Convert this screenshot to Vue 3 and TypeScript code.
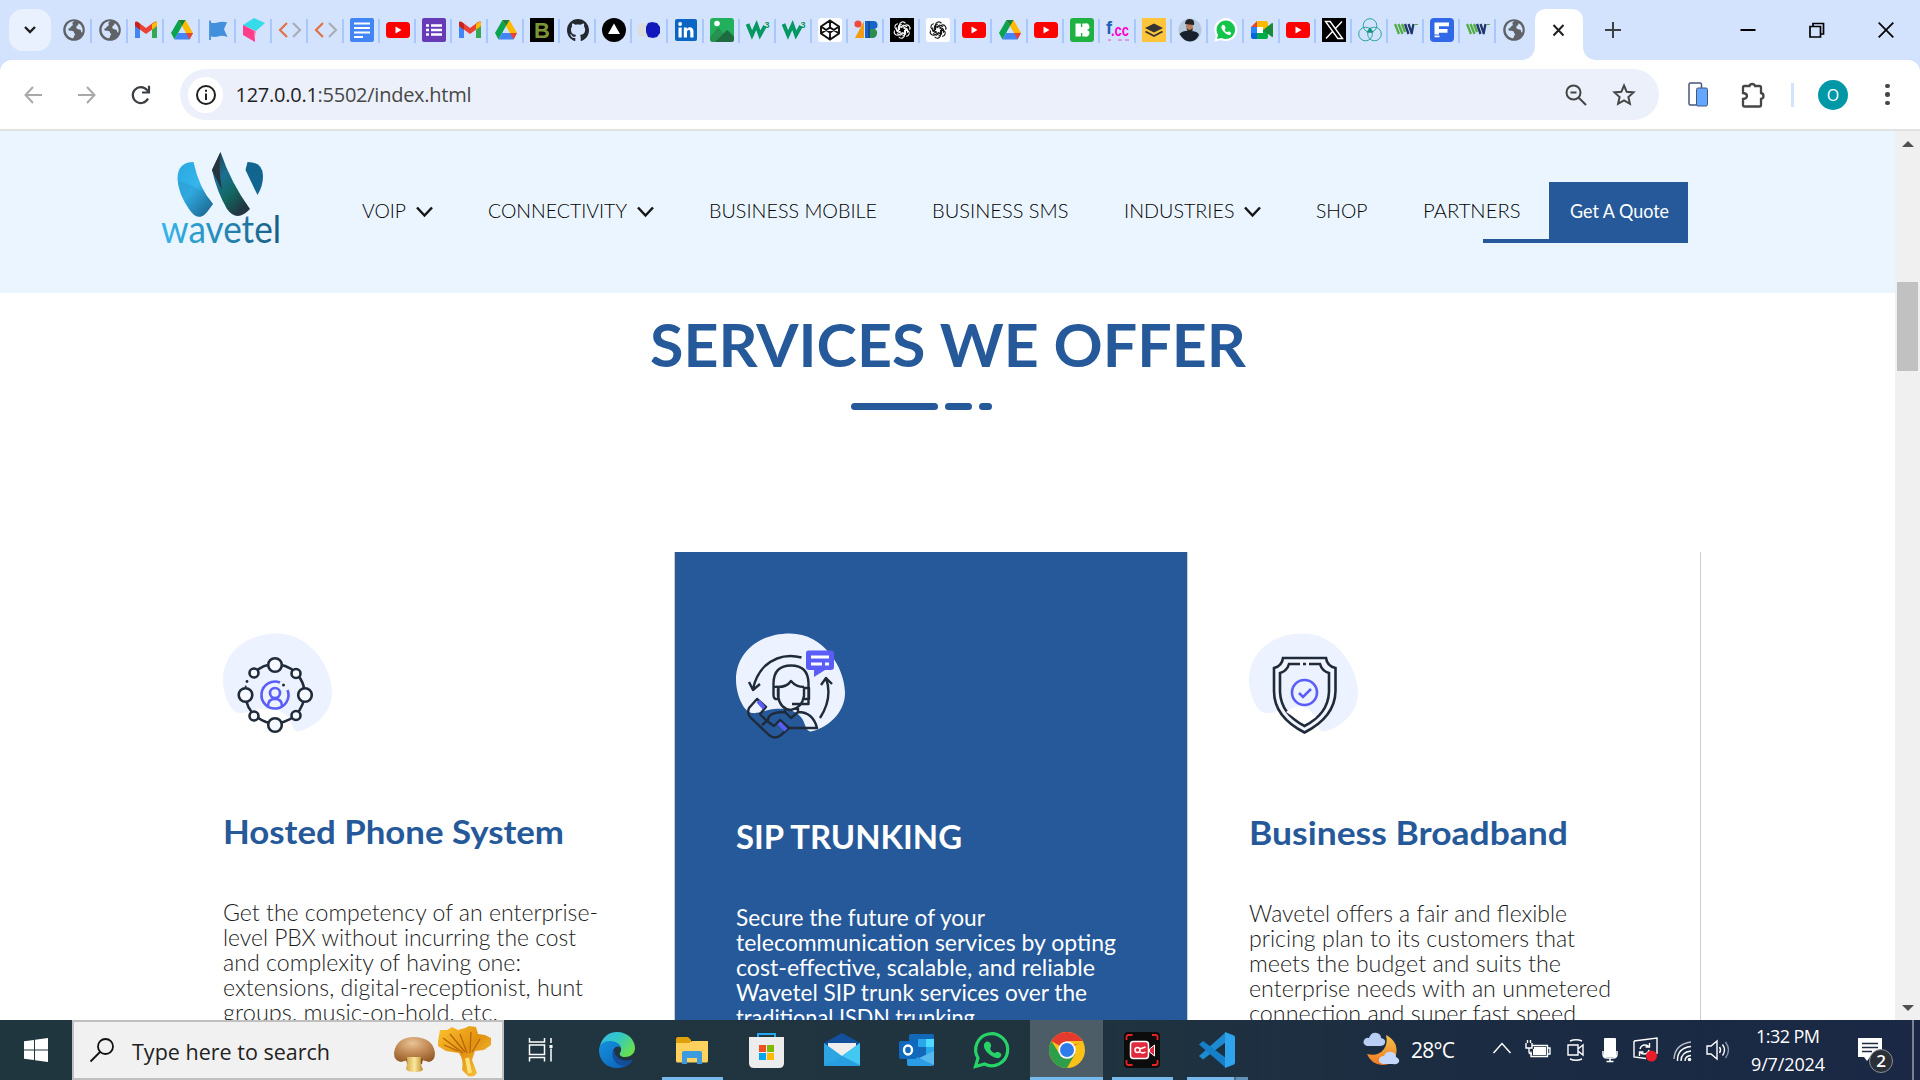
<script setup lang="ts">
import type { Directive } from 'vue'

/** Spreads or tightens the letters so that a label fills the given width. */
const vFit: Directive<HTMLElement, number> = {
  mounted(el, { value }) {
    const n = (el.textContent ?? '').trim().length
    const natural = el.getBoundingClientRect().width
    if (n > 1) {
      const s = (value - natural) / (n - 1)
      el.style.letterSpacing = `${s}px`
      el.style.marginRight = `${-s}px`
    }
  },
}

/** Widens or narrows the letterforms themselves so that a label fills the given width. */
const vStretch: Directive<HTMLElement, number> = {
  mounted(el, { value }) {
    const natural = el.getBoundingClientRect().width
    el.style.transformOrigin = '0 50%'
    el.style.transform = `scaleX(${value / natural})`
    el.style.marginRight = `${value - natural}px`
  },
}

const knotArm = '<path d="M9 12V6a3.800 3.800 0 0 1 7-2M9 9l5-3 4 2"/>'
const knot = [0, 60, 120, 180, 240, 300].map((a) => `<g transform="rotate(${a} 12 12)">${knotArm}</g>`).join('')

const glyphs: Record<string, string> = {
  globe: '<circle cx="12" cy="12" r="10.8" fill="#5f6368"/><path d="M12.5 3c-2 1-2.5 2-1.8 3.3.5 1-.3 1.500-1.200 1.900-1 .4-.8 1.300-1.500 1.800-.8.6-1.700.5-1.700 1.400 0 1 1.500 1.300 3 1.300 1.800 0 2.700.9 2.700 2 0 .8 1.200.7 1.200 1.600 0 1-1.200 1.100-1.200 2.100 0 .8-.5 1.500-1.200 1.800-4-.8-7-4-7.200-8.300C3.600 7 7.600 3 12.500 3zM16.800 5.200c2.300 1.500 3.800 4 3.800 6.900 0 .9-.1 1.700-.4 2.500-.9-.2-1.200-.9-1.200-1.700 0-1-.7-1.500-1.800-1.500-1.600 0-2.900-.8-2.900-2.200 0-1.200.9-1.600 1.600-2 .7-.5.3-1.300.9-2z" fill="#d3e3fd"/>',
  gmail: '<path d="M1 6v14h5V11z" fill="#4285f4"/><path d="M18 11v9h5V6z" fill="#34a853"/><path d="M1 4.500C1 3.500 2.500 3 4 4l8 6 8-6c1.500-1 3-.5 3 .5V8l-11 8L1 8z" fill="#ea4335"/><path d="M18 6.200L21 4c1-.7 2-.2 2 1.500V8l-5 3.800z" fill="#fbbc04"/><path d="M1 8V5.500C1 4 2 3.400 3.500 4L6 6v5.800z" fill="#c5221f"/>',
  drive: '<path d="M8.500 2h7L23 15h-7z" fill="#ffba00"/><path d="M8.500 2L12 8 4.500 21.500 1 15z" fill="#0ca34f"/><path d="M8 15h15l-3.500 6.500h-15z" fill="#4285f4"/><path d="M16 15h7l-3.500 6.500z" fill="#ea4335"/><path d="M8.500 2h7L12 8z" fill="#188038"/>',
  flag: '<path d="M4 2.500V22" stroke="#428fdc" stroke-width="1.800"/><path d="M4.500 4.500q3 1.200 7 0t9.500-.2l-3 7 3.500 7.700q-6-2-9.500-.5-4 1-7.500-.3z" fill="#428fdc"/>',
  cube: '<path d="M1 7L12 0l11 5-9 8z" fill="#35dbe8"/><path d="M1 7l12 6v11L1 17z" fill="#ff3d8b"/><path d="M12 13l2 0-2 10z" fill="#ff7baa"/>',
  code: '<path d="M9 5L2 12l7 7" fill="none" stroke="#e07046" stroke-width="2.200"/><path d="M15 5l7 7-7 7" fill="none" stroke="#a9adb5" stroke-width="2.200"/>',
  docs: '<rect width="24" height="24" rx="2" fill="#4285f4"/><path d="M4 5.500h16M4 10h16M4 14.500h16M4 19h9" stroke="#fff" stroke-width="2.200"/>',
  yt: '<rect y="4" width="24" height="16" rx="3.500" fill="#f00"/><path d="M9.500 8.500v7l6-3.500z" fill="#fff"/>',
  forms: '<rect width="24" height="24" rx="2" fill="#673ab7"/><path d="M4 7.500h3M9 7.500h11M4 12h3M9 12h11M4 16.500h3M9 16.500h11" stroke="#fff" stroke-width="2.700"/>',
  b: '<rect width="24" height="24" fill="#000"/><text x="12" y="20" text-anchor="middle" font-family="Liberation Sans" font-weight="bold" font-size="22" fill="#7c9636">B</text>',
  github: '<path d="M12 1C5.900 1 1 5.900 1 12.300c0 5 3.200 9.200 7.500 10.700.5.100.8-.2.800-.6v-2.500c-3.300.7-4-1.200-4.200-1.800-.4-.9-.9-1.600-1.500-1.900 2-.4 2.500 1.700 3.200 2.200 1 .6 2.200.4 2.700.1.100-.7.400-1.200.7-1.500-2.700-.4-5.200-1.300-5.200-5.300 0-1.300.4-2.300 1.100-3.100-.3-.9-.3-2 .1-3.100 1.200 0 2.300.7 3.200 1.300 1.700-.4 3.600-.4 5.300 0 .9-.6 2-1.300 3.200-1.300.4 1.100.4 2.200.1 3.100.7.800 1.100 1.800 1.100 3.100 0 4-2.500 4.900-5.200 5.300.5.400.8 1.100.8 2.300v3.100c0 .4.300.7.8.6C19.800 21.500 23 17.300 23 12.300 23 5.900 18.100 1 12 1z" fill="#24292f"/>',
  vercel: '<circle cx="12" cy="12" r="12" fill="#000"/><path d="M12 5.500l6 10.500H6z" fill="#fff"/>',
  blob: '<path d="M0 8l3-3 3 1 4-2v16l-4-2-3 1-3-3z" fill="#dcdcdc"/><path d="M10 5l4-1 5 1 3 4v6l-3 4-4 1-5-1-2-5V9z" fill="#1119bd"/>',
  linkedin: '<rect x="1" y="1" width="22" height="22" rx="2" fill="#0a66c2"/><path d="M4.500 9.500h3.200v10H4.500zM9.800 9.500h3.100v1.400c1.500-2.500 6.600-2.300 6.600 2.400v6.200h-3.200V14c0-3-3.300-2.500-3.300 0v5.500H9.800z" fill="#fff"/><circle cx="6.100" cy="6" r="1.900" fill="#fff"/>',
  picture: '<rect width="24" height="24" rx="3" fill="#22b05d"/><path d="M0 19L8 9l6 7 4-4 6 6v3q0 3-3 3H3q-3 0-3-3z" fill="#279250"/><path d="M5 24l12-12 7 7v2q0 3-3 3z" fill="#1e6b40"/><circle cx="7" cy="5.500" r="2.800" fill="#fff"/>',
  w3: '<path d="M1.500 6L6 17l4.500-10L14 17l5-9" fill="none" stroke="#059862" stroke-width="3.800"/><text x="18.500" y="10" font-family="Liberation Sans" font-weight="bold" font-size="9" fill="#059862">3</text>',
  codepen: '<rect width="24" height="24" rx="3" fill="#fff"/><path d="M12 2.500l9 6v7l-9 6-9-6v-7zM3 8.500l9 6 9-6M3 15.500l9-6 9 6M12 2.500v7M12 14.500v7" fill="none" stroke="#111" stroke-width="1.900"/>',
  zb: '<circle cx="4" cy="6" r="3.600" fill="#ee4b3c"/><path d="M10 3v17H1z" fill="#f29b13"/><path d="M11 3h8a4 4 0 0 1 1 8 5 5 0 0 1-1 9h-8z" fill="#1565c9"/><path d="M15 11h6a5 5 0 0 1-2 9h-4z" fill="#2c8e4a"/><path d="M15 3v17" stroke="#164a9a" stroke-width="2"/>',
  gptDark: `<rect width="24" height="24" fill="#000"/><g fill="none" stroke="#fff" stroke-width="1.300" transform="translate(2 2) scale(.84)">${knot}</g>`,
  gptLight: `<rect width="24" height="24" rx="3" fill="#fff"/><g fill="none" stroke="#111" stroke-width="1.300" transform="translate(2 2) scale(.84)">${knot}</g>`,
  icons8: '<rect width="24" height="24" rx="3" fill="#1fb141"/><path d="M5.500 5.500h5.500v13H5.500z" fill="#fff"/><path d="M12 5.500h3a3.300 3.300 0 0 1 2 6.500 3.300 3.300 0 0 1-2 6.500h-3l-1.500-4v-5z" fill="#fff"/><path d="M11.600 5v4M11.600 15v4" stroke="#1fb141" stroke-width="1.400"/>',
  fcc: '<text x="0" y="16" font-family="Liberation Sans" font-weight="bold" font-size="18" fill="#2361b5">f</text><text x="5" y="18" font-family="Liberation Sans" font-weight="bold" font-size="16" textLength="18" lengthAdjust="spacingAndGlyphs" fill="#ff00d4">.cc</text><path d="M2 22h3M12 22h4M19 22h4" stroke="#d79bea" stroke-width="2"/>',
  layers: '<rect width="24" height="24" fill="#ffc53a"/><path d="M3 10l9-4.500 9 4.500-9 4.500z" fill="#333"/><path d="M3.500 13.500L12 18l8.500-4.500" fill="none" stroke="#333" stroke-width="1.800"/>',
  avatar: '<circle cx="12" cy="12" r="11.500" fill="#b4c9de"/><path d="M1.500 16q4-4 10.500-3 8 0 9 4-3 6.500-9 6.500T1.500 16z" fill="#17202c"/><ellipse cx="11.500" cy="8" rx="3.500" ry="4.500" fill="#b87f60"/><path d="M7 6q0-5 5-5t4 6z" fill="#252525"/><path d="M8.500 10q3 4 6 0v3h-5z" fill="#30211c"/>',
  whatsapp: '<path d="M.5 23.500l1.500-6A11.500 11.500 0 1 1 7 22z" fill="#fff"/><path d="M3 21l1-4.200a9.300 9.300 0 1 1 3.500 3.200z" fill="#14c54c"/><path d="M8.500 7c-2 1.500-1 4.500 1.500 7s5.500 4 7 2c1-1.500-2.500-3.500-3.500-2-1 .8-3.500-2-2.500-2.800 1.500-1.200-.8-5.200-2.500-4.200z" fill="#fff"/>',
  meet: '<path d="M7 3v6H1z" fill="#ea4335"/><path d="M1 9h6v6H1z" fill="#2684fc"/><path d="M1 15h6v6H3q-2 0-2-2z" fill="#0066da"/><path d="M7 3h9q2 0 2 2v6l-5 1V9H7z" fill="#ffba00"/><path d="M7 21v-6h6v-3l5-1v8q0 2-2 2z" fill="#00ac47"/><path d="M7 9h6v6H7z" fill="#fff"/><path d="M13 12l9-7q1-.5 1 1v12q0 1.500-1 1z" fill="#188c3b"/>',
  x: '<rect width="24" height="24" fill="#000"/><path d="M3.500 3.500h4.700l12.300 17h-4.700zM20 3.500l-7 7.500M11 13l-7 7.500" fill="#000" stroke="#fff" stroke-width="1.400"/>',
  rings: '<g fill="none" stroke="#2aa79b" stroke-width="1"><circle cx="12" cy="7.500" r="6.800"/><circle cx="7.500" cy="16" r="6.800"/><circle cx="16.500" cy="16" r="6.800"/></g><path d="M12 9l3.500 5.500h-7z" fill="#12947f"/>',
  ww: '<path d="M1 6l4 10M4.500 6l4 10M8 6l3 8" stroke="#53ad45" stroke-width="2.300"/><path d="M11 6l3.500 10M14.500 6l3.500 10M19.500 6L17.500 16" stroke="#21386e" stroke-width="2.300"/><path d="M21 6.500h3" stroke="#53ad45"/>',
  f: '<rect width="24" height="24" rx="4" fill="#3068e8"/><path d="M4.500 4.500H19v3.800H9V11h8.500v3.800H9v1.700H4.500zM4.500 17.500H9.500v1.800h-5z" fill="#fff"/>',
}

const tabs: string[] = [
  'globe', 'globe', 'gmail', 'drive', 'flag', 'cube', 'code', 'code', 'docs', 'yt', 'forms', 'gmail', 'drive', 'b',
  'github', 'vercel', 'blob', 'linkedin', 'picture', 'w3', 'w3', 'codepen', 'zb', 'gptDark', 'gptLight', 'yt', 'drive',
  'yt', 'icons8', 'fcc', 'layers', 'avatar', 'whatsapp', 'meet', 'yt', 'x', 'rings', 'ww', 'f', 'ww', 'globe',
]

interface NavItem { label: string; width: number; menu?: boolean }
const nav: NavItem[] = [
  { label: 'VOIP', width: 44, menu: true },
  { label: 'CONNECTIVITY', width: 139, menu: true },
  { label: 'BUSINESS MOBILE', width: 168 },
  { label: 'BUSINESS SMS', width: 136.5 },
  { label: 'INDUSTRIES', width: 110.5, menu: true },
  { label: 'SHOP', width: 51.5 },
  { label: 'PARTNERS', width: 97.5 },
]

interface Service { key: string; title: string; width: number; lines: [string, number][] }
const services: Service[] = [
  {
    key: 'hosted', title: 'Hosted Phone System', width: 341,
    lines: [['Get the competency of an enterprise-', 375], ['level PBX without incurring the cost', 353], ['and complexity of having one:', 298], ['extensions, digital-receptionist, hunt', 360], ['groups, music-on-hold, etc.', 275]],
  },
  {
    key: 'sip', title: 'SIP TRUNKING', width: 226,
    lines: [['Secure the future of your', 249], ['telecommunication services by opting', 380], ['cost-effective, scalable, and reliable', 359], ['Wavetel SIP trunk services over the', 351], ['traditional ISDN trunking.', 244]],
  },
  {
    key: 'broadband', title: 'Business Broadband', width: 319,
    lines: [['Wavetel offers a fair and flexible', 318], ['pricing plan to its customers that', 326], ['meets the budget and suits the', 312], ['enterprise needs with an unmetered', 362], ['connection and super fast speed', 327]],
  },
]

const apps: { icon: string; state?: string }[] = [
  { icon: 'tasks' }, { icon: 'edge' }, { icon: 'folder', state: 'open' }, { icon: 'store' }, { icon: 'mail' },
  { icon: 'outlook' }, { icon: 'wa' }, { icon: 'chrome', state: 'active' }, { icon: 'rec', state: 'open' },
  { icon: 'vscode', state: 'multi' },
]
const appIcons: Record<string, string> = {
  tasks: '<g fill="none" stroke="#fff" stroke-width="1.500"><path d="M5.500 6v4h15V6M5.500 29.500v-4h15v4M5.500 13h15v9.500h-15zM27 6v5M27 16.500v13"/></g><rect x="25.500" y="13" width="3" height="3" fill="#fff"/>',
  edge: '<defs><linearGradient id="eg1" x1="0" y1="0" x2="1" y2=".6"><stop offset="0" stop-color="#35b5ea"/><stop offset=".5" stop-color="#33c8c4"/><stop offset="1" stop-color="#68e04e"/></linearGradient><linearGradient id="eg2" x1="0" y1="0" x2="1" y2="1"><stop offset="0" stop-color="#1592de"/><stop offset="1" stop-color="#0b5cb5"/></linearGradient></defs><path d="M1 14C3 6 9 0 18 0c11 0 18 8 18 16 0 6-5 9-10 9-4 0-6-2-5-4 3-5 0-9-6-9S3 14 1 18z" fill="url(#eg1)"/><path d="M0 18c0-6 5-9 11-9 7 0 11 4 11 7-3-4-9 0-8 6 1 7 10 11 19 7-4 5-9 7-15 7C7 36 0 28 0 18z" fill="url(#eg2)"/><path d="M15 17c-4 6 0 17 11 17 4-1 7-4 8-7-8 4-19 0-19-10z" fill="#144e99"/>',
  folder: '<path d="M2 7q0-2 2-2h10l3 3v5H2z" fill="#dfa00c"/><path d="M2 11h13l3-2h16v20q0 1.500-1.500 1.500h-29Q2 30.500 2 29z" fill="#ffd25e"/><path d="M8 32V21q0-2 2-2h16q2 0 2 2v11h-5v-6H13v6z" fill="#3c9be0"/>',
  store: '<path d="M9 7V2h17v5" fill="none" stroke="#22a7ee" stroke-width="2"/><path d="M0 5h35v26q0 5-5 5H5q-5 0-5-5z" fill="#ececec"/><path d="M10 13h7v7h-7z" fill="#f25022"/><path d="M18 13h7v7h-7z" fill="#7fba00"/><path d="M10 21h7v7h-7z" fill="#00a4ef"/><path d="M18 21h7v7h-7z" fill="#ffb900"/>',
  mail: '<path d="M0 11L18 1l18 10v11H0z" fill="#124f9c"/><path d="M4 11h28v9L18 30 4 20z" fill="#eee"/><path d="M0 11l18 13L36 11v22q0 1-1 1H1q-1 0-1-1z" fill="#2da5e2"/><path d="M18 24L36 11v22z" fill="#43c7f3"/><path d="M0 34l18-10 18 10z" fill="#2299e0" opacity=".6"/>',
  outlook: '<rect x="10" y="2" width="25" height="31" rx="2" fill="#1267b8"/><path d="M19 7h8v8h-8z" fill="#28a8ea"/><path d="M27 7h8v8h-8z" fill="#50d9ff"/><path d="M27 15h8v8h-8z" fill="#28a8ea"/><path d="M8 19l14 8 13-8v13q0 2-2 2H10q-2 0-2-2z" fill="#2c9be5"/><path d="M20 26l15-7v14z" fill="#56b8ee"/><rect y="9" width="18" height="18" rx="2" fill="#0f69bd"/><ellipse cx="9" cy="18" rx="4" ry="4.500" fill="none" stroke="#fff" stroke-width="2.400"/>',
  wa: '<path d="M1.500 34.500L4 26A16 16 0 1 1 10.500 32z" fill="none" stroke="#26d366" stroke-width="3.200"/><path d="M12 10c-4 2-2 8 3 12s10 6 12 2c2-3-4-5-5-3.500-2 2-7-3-5.500-5 2-2-1-7.500-4.500-5.500z" fill="#26d366"/>',
  chrome: '<circle cx="18" cy="18" r="18" fill="#fbc116"/><path d="M18 18L2.400 9A18 18 0 0 1 33.600 9z" fill="#e53a2e"/><path d="M2.400 9A18 18 0 0 0 18 36l8-14-16-1z" fill="#2e9e4b"/><path d="M18 9h15.600a18 18 0 0 1 .6 1l-10 3z" fill="#fbc116"/><circle cx="18" cy="18" r="8.700" fill="#fff"/><circle cx="18" cy="18" r="7" fill="#2f7bea"/>',
  rec: '<rect width="36" height="36" rx="4" fill="#0c0c0d"/><path d="M2.500 8V5q0-2 2-2h4M28 3h3.500q2 0 2 2v3M2.500 28v3q0 2 2 2h4M28 33h3.500q2 0 2-2v-3" fill="none" stroke="#e32424" stroke-width="1.800"/><rect x="6.500" y="9.500" width="18" height="17" rx="3" fill="#e12a3e" stroke="#fff" stroke-width="1.500"/><path d="M25.500 17l5-4v11l-5-4z" fill="#e12a3e" stroke="#fff"/><circle cx="13.500" cy="18" r="2.500" fill="none" stroke="#fff" stroke-width="1.500"/><path d="M15.500 19.500q3 2.500 6 .5M15.500 17l6-2" fill="none" stroke="#fff" stroke-width="1.500"/>',
  vscode: '<path d="M0 24l4 3.500L27 10V0z" fill="#1d8ad2"/><path d="M0 12.500L4 9l23 17v10z" fill="#157fc8"/><path d="M26 0l9 3.500q1 .5 1 2v25q0 1.500-1 2L26 36z" fill="#2da4ed"/>',
}
</script>

<template>
  <div class="screen">
    <div class="tabstrip">
      <div class="tab-search">
        <svg width="14" height="10" viewBox="0 0 14 10"><path d="M2 2l5 5 5-5" fill="none" stroke="#1f1f1f" stroke-width="2.400" /></svg>
      </div>
      <div v-for="(t, i) in tabs" :key="i" class="tab">
        <svg width="24" height="24" viewBox="0 0 24 24" v-html="glyphs[t]"></svg>
        <i v-if="i < tabs.length - 1"></i>
      </div>
      <div class="tab-active">
        <svg width="72" height="51" viewBox="0 0 72 51"><path d="M0 51Q12 49 12 37V12Q12 0 24 0H48Q60 0 60 12V37Q60 49 72 51z" fill="#fff" /><path d="M30.500 16l10 10.500M40.500 16l-10 10.500" stroke="#1f1f1f" stroke-width="2" /></svg>
      </div>
      <svg class="plus" width="16" height="16" viewBox="0 0 16 16"><path d="M8 0v16M0 8h16" stroke="#3c4043" stroke-width="2" /></svg>
      <div class="win">
        <svg width="16" height="16" viewBox="0 0 16 16"><path d="M.5 8h15" stroke="#000" stroke-width="2" /></svg>
        <svg width="16" height="16" viewBox="0 0 16 16"><path d="M1 4.500h10.500v10.500H1zM4 4.500v-3h10.500V12h-3" fill="none" stroke="#000" stroke-width="1.700" /></svg>
        <svg width="16" height="16" viewBox="0 0 16 16"><path d="M.7.700l14.600 14.600M15.300.700L.7 15.300" stroke="#000" stroke-width="1.700" /></svg>
      </div>
    </div>

    <div class="toolbar-bg">
      <div class="toolbar">
        <svg class="nav-icon" width="18" height="18" viewBox="0 0 18 18"><path d="M18 9H1.500M9 1L1.500 9 9 17" fill="none" stroke="#a8a9ab" stroke-width="2" /></svg>
        <svg class="nav-icon" width="18" height="18" viewBox="0 0 18 18"><path d="M0 9h16.500M9 1l7.500 8L9 17" fill="none" stroke="#a8a9ab" stroke-width="2" /></svg>
        <svg class="nav-icon" width="20" height="20" viewBox="0 0 20 20"><path d="M17 13.500A8 8 0 1 1 16 5l1.500 1.500M18 .7v6.800h-7" fill="none" stroke="#3c3f43" stroke-width="2.200" /></svg>
        <div class="omnibox">
          <div class="info"><svg width="22" height="22" viewBox="0 0 22 22"><circle cx="11" cy="11" r="9" fill="none" stroke="#1f1f1f" stroke-width="2" /><path d="M11 9.500V16M11 5.800v2" stroke="#1f1f1f" stroke-width="2" /></svg></div>
          <span class="url"><span v-fit="236">127.0.0.1<span class="dim">:5502/index.html</span></span></span>
          <svg class="zoomi" width="22" height="22" viewBox="0 0 22 22"><circle cx="8.500" cy="8.500" r="7" fill="none" stroke="#454746" stroke-width="2" /><path d="M5.500 8.500h6M13.500 13.500l7.500 7.500" stroke="#454746" stroke-width="2" /></svg>
          <svg width="24" height="24" viewBox="0 0 24 24"><path d="M12 2.500l2.700 6.300 6.800.6-5.100 4.600 1.500 6.800L12 17.300l-5.900 3.500L7.600 14 2.500 9.400l6.800-.6z" fill="none" stroke="#454746" stroke-width="2" /></svg>
        </div>
        <svg class="phone" width="20" height="25" viewBox="0 0 20 25"><rect x="1" y="1" width="12.500" height="22" rx="1.500" fill="#fff" stroke="#47567e" stroke-width="1.500" /><rect x="8.500" y="6" width="11" height="18" rx="1.500" fill="#65a6ff" stroke="#47567e" /></svg>
        <svg class="puzzle" width="26" height="26" viewBox="0 0 26 26"><path d="M3 5.500q0-1.500 1.500-1.500H9.500q.5-2 2.700-2T15 4h4.500Q21 4 21 5.500V11q2.500.5 2.500 3T21 17v6q0 1.500-1.500 1.500h-15Q3 24.500 3 23v-6q4-.5 4-3t-4-3z" fill="none" stroke="#454746" stroke-width="2.300" /></svg>
        <i class="tsep"></i>
        <div class="profile">O</div>
        <div class="dots"><i></i><i></i><i></i></div>
      </div>
    </div>

    <div class="viewport">
      <main class="page">
        <header class="site-header">
          <svg class="logo" width="122" height="98" viewBox="0 0 122 98">
            <defs>
              <linearGradient id="la" x1="0" y1="0" x2=".7" y2="1"><stop offset="0" stop-color="#2aa9e0" /><stop offset=".55" stop-color="#36b5ed" /><stop offset="1" stop-color="#1a5f85" /></linearGradient>
              <linearGradient id="lb" x1="0" y1="0" x2=".6" y2="1"><stop offset="0" stop-color="#263b4a" /><stop offset=".4" stop-color="#1b6f91" /><stop offset=".7" stop-color="#12675f" /><stop offset="1" stop-color="#213743" /></linearGradient>
              <linearGradient id="lc" x1="0" y1="0" x2="1" y2="0"><stop offset="0" stop-color="#35b7ec" /><stop offset="1" stop-color="#195b7f" /></linearGradient>
            </defs>
            <path d="M32.500 10Q16.500 10 16.500 27 17 41 28 57 37 71 46 60L52 52Q38 36 32.500 10z" fill="url(#la)" />
            <path d="M17 29Q38 33 52 52L46 60Q37 71 28 57 19 45 17 29z" fill="#2490c4" opacity=".35" />
            <path d="M59.500 0L51 18Q56 40 66 57 76 71 89 57 70 31 59.500 0z" fill="url(#lb)" />
            <path d="M59.500 0L51 18 61 38Q57 16 59.500 0z" fill="#27333d" />
            <path d="M86.500 10L84.500 18 96.500 43Q102 34 102 24 102 10 86.500 10z" fill="#11658e" />
            <text x="0" y="91" font-family="Lato" font-weight="400" font-size="38.500" textLength="120" lengthAdjust="spacingAndGlyphs" fill="url(#lc)">wavetel</text>
          </svg>
          <nav>
            <a v-for="n in nav" :key="n.label"><span v-stretch="n.width">{{ n.label }}</span>
              <svg v-if="n.menu" width="17" height="12" viewBox="0 0 17 12"><path d="M1 1.500l7.500 8 7.500-8" fill="none" stroke="#161616" stroke-width="2.500" /></svg>
            </a>
          </nav>
          <div class="quote-wrap"><i></i><a class="quote"><span v-stretch="99">Get A Quote</span></a></div>
        </header>

        <section class="services">
          <h1><span v-stretch="596">SERVICES WE OFFER</span></h1>
          <div class="rule"><i></i><i></i><i></i></div>
          <div class="cards">
            <article v-for="s in services" :key="s.key" :class="['card', s.key]">
              <svg class="pic" width="112" height="110" viewBox="0 0 112 110">
                <path d="M0 47C0 20 22 .500 54 .500 88 .500 109 35 109 60 109 80 92 94 77 98 71 100 70 94 67 87 61 76 47 75 38 76 28 77 23 81 16 80 6 78 0 59 0 47z" fill="#ecf2ff" />
                <g v-if="s.key === 'hosted'" fill="none" stroke="#202b3a" stroke-width="2.600">
                  <path d="M31 40A29.500 29.500 0 1 1 22.500 62" />
                  <circle cx="24" cy="48.500" r="1.400" fill="#202b3a" stroke="none" /><circle cx="22.700" cy="53.500" r="1" fill="#202b3a" stroke="none" />
                  <g fill="#f6f9ff"><circle cx="52" cy="32" r="6.800" /><circle cx="22.500" cy="62" r="6.800" /><circle cx="82" cy="62" r="6.800" /><circle cx="52" cy="92" r="6.800" /><circle cx="31" cy="40" r="4.500" /><circle cx="73" cy="40.500" r="4.500" /><circle cx="73" cy="82.500" r="4.500" /><circle cx="31" cy="83" r="4.500" /></g>
                  <g stroke="#5a5df7"><path d="M57 49.500A13.500 13.500 0 1 0 64.500 57" /><circle cx="52" cy="60" r="5" /><path d="M45 73q0-7 7-7t7 7" /></g>
                  <circle cx="60.500" cy="52" r="1.500" fill="#202b3a" stroke="none" />
                </g>
                <g v-else-if="s.key === 'sip'" fill="none" stroke="#202b3a" stroke-width="2.400" stroke-linejoin="round">
                  <path d="M65.500 24.500Q45 19 29 33 20 42 17 56M13 49l4 8 7-6M84 85Q97 65 90 45M85 52l5-7 6 6" />
                  <path d="M37.500 62V50Q38 32.500 55 32.500T72.500 50V71H56M42 54Q51 54 55 48 60 54 68 54M42 54V63Q44 76 55 77 66 75 68 63V54M37.500 56q0-3 5-2v12q-5 1-5-4M68 55h5v11h-5M49 75v4q-17 0-17 8l-6 5M62 75v4q15 0 19 16H50M49 79l6 6 7-6" />
                  <path d="M21 66L13 75Q11 80 14 84L33 102Q39 107 45 102L53 95 44 87 38 93Q29 87 24 81L30 74z" />
                  <path d="M22 68l6 7M43 90l7 7" stroke="#5a5df7" stroke-width="4" />
                  <path d="M72 17.500h23q3 0 3 3V34q0 3-3 3h-6l-11 7v-7h-5q-3 0-3-3V20q0-2.500 2-2.500z" fill="#5a5df7" stroke="none" /><path d="M75 24h18M75 31h11M89 31h4" stroke="#fff" stroke-width="3" />
                </g>
                <g v-else fill="none" stroke="#202b3a" stroke-width="2.600">
                  <path d="M34 25H77Q78 33 86.500 35V58Q86 84 55.500 99.500 25 84 25 58V35Q33 33 34 25z" fill="#f1f5ff" />
                  <path d="M51 31H40Q38 38 31 40V59Q32 81 55.500 93 79 81 80 59V40Q73 38 71 31H60M54 31h3" fill="#ecf2ff" />
                  <path d="M37 79Q55 66 67 84L55.500 91z" fill="#fff" stroke="none" />
                  <g stroke="#5a5df7"><circle cx="55.500" cy="59.500" r="12.500" /><path d="M50 60l4 4 8-8" /></g>
                </g>
              </svg>
              <h2><span v-stretch="s.width">{{ s.title }}</span></h2>
              <p><template v-for="l in s.lines" :key="l[0]"><span v-stretch="l[1]">{{ l[0] }}</span><br /></template></p>
            </article>
          </div>
        </section>
      </main>
      <div class="scrollbar">
        <svg width="12" height="6" viewBox="0 0 12 6"><path d="M0 6l6-6 6 6z" fill="#505050" /></svg>
        <i></i>
        <svg class="down" width="12" height="6" viewBox="0 0 12 6"><path d="M0 0l6 6 6-6z" fill="#505050" /></svg>
      </div>
    </div>

    <footer class="taskbar">
      <div class="start"><svg width="24" height="24" viewBox="0 0 24 24"><path d="M0 3.200L10 2v9.500H0zM11 1.800L24 0v11.500H11zM0 12.500h10V22L0 20.800zM11 12.500h13V24l-13-1.800z" fill="#fff" /></svg></div>
      <div class="search">
        <svg class="lens" width="24" height="24" viewBox="0 0 24 24"><circle cx="15.500" cy="8.500" r="7.500" fill="none" stroke="#111" stroke-width="1.800" /><path d="M10 14L.5 23.500" stroke="#111" stroke-width="1.800" /></svg>
        <span v-fit="198">Type here to search</span>
        <svg class="mush" width="100" height="52" viewBox="0 0 100 52">
          <defs><radialGradient id="m1" cx=".45" cy=".25" r=".8"><stop offset="0" stop-color="#eac495" /><stop offset=".5" stop-color="#c28a55" /><stop offset="1" stop-color="#925b28" /></radialGradient><linearGradient id="m2" x1="0" y1="0" x2="1" y2="0"><stop offset="0" stop-color="#d3a744" /><stop offset=".5" stop-color="#fbe79d" /><stop offset="1" stop-color="#bd8b2c" /></linearGradient><linearGradient id="m3" x1="0" y1="0" x2="1" y2="1"><stop offset="0" stop-color="#ffc331" /><stop offset=".5" stop-color="#e0910f" /><stop offset="1" stop-color="#ffd34b" /></linearGradient></defs>
          <path d="M0 27Q2 11 21 11 39 12 41 27 41 35 35 36L21 32 7 36Q0 35 0 27z" fill="url(#m1)" /><path d="M12 33q9-3 17 0l-1 5q-7 3-15 0z" fill="#80501d" /><path d="M13 31h14q-1 8 2 12 0 3-8 3t-9-3q2-6 1-12z" fill="url(#m2)" />
          <path d="M44 15L46 4 53 4 58 1 64 4 71 2 75 0 82 1 84 8 91 9 97 12 97 19 90 24 81 25 78 34 83 47Q80 52 74 50L68 44Q70 34 65 27L52 25 44 20z" fill="url(#m3)" />
          <path d="M49 12l20 15M56 8l15 18M66 8l7 19M77 6l-1 21M86 13l-8 13M50 19l14 6" stroke="#b8610a" stroke-width="1.200" fill="none" /><path d="M73 32l3 15" stroke="#ffe27c" stroke-width="4" />
        </svg>
      </div>
      <div v-for="a in apps" :key="a.icon" :class="['app', a.state]">
        <svg width="36" height="36" viewBox="0 0 36 36" v-html="appIcons[a.icon]"></svg>
      </div>
      <div class="tray">
        <svg class="weather" width="38" height="36" viewBox="0 0 38 36"><defs><linearGradient id="mo" x1="0" y1="0" x2="0" y2="1"><stop offset="0" stop-color="#f3c54b" /><stop offset="1" stop-color="#f27721" /></linearGradient></defs><path d="M23 3Q36 10 33 23 30 33 19 33 8 32 4 22 15 25 21 17 25 11 23 3z" fill="url(#mo)" /><path d="M4 14q-5-2-3-6 2-3 5-2 2-6 8-5 4 1 4 5 5 1 4 5-1 3-5 3z" fill="#b9cef5" /><path d="M20 32q-5-1-4-5 1-3 5-3 2-5 8-4 4 1 4 5 4 2 3 5-2 3-6 2z" fill="#c5d8fb" /></svg>
        <span class="temp"><span v-fit="44">28°C</span></span>
        <svg class="chev" width="18" height="12" viewBox="0 0 18 12"><path d="M.5 11L9 1.500l8.500 9.500" fill="none" stroke="#fff" stroke-width="1.500" /></svg>
        <svg class="bat" width="26" height="18" viewBox="0 0 26 18"><path d="M7 5.500h15.500v11H6v-5M22.500 8H25v6h-2.500M1 3v5h6V3M2.500 0v3M5.500 0v3M4 8v4q0 2 3 2" fill="none" stroke="#fff" stroke-width="1.400" /><path d="M9 7h12v8H8V9h1z" fill="#fff" /></svg>
        <svg class="cam" width="18" height="22" viewBox="0 0 18 22"><path d="M1 6h10v10H1zM11 10l5-4v10l-5-4M3 2q6-2.500 12 0M3 20q6 2.500 12 0" fill="none" stroke="#fff" stroke-width="1.400" /></svg>
        <svg class="mic" width="16" height="24" viewBox="0 0 16 24"><rect x="2" width="12" height="19" rx="1" fill="#fff" /><path d="M1 13v3q0 4 4 4h6q4 0 4-4v-3M8 20v3M4.500 23.500h7" fill="none" stroke="#fff" stroke-width="1.500" /></svg>
        <svg class="upd" width="25" height="25" viewBox="0 0 25 25"><path d="M1 4L24 1v16M13 21.500L1 20V4M7 12q1-4 5-4 2.500 0 4 2M16.500 6v4h-4M16 13q-1 4-5 4-2.500 0-4-2M6.500 19v-4h4" fill="none" stroke="#fff" stroke-width="1.400" /><circle cx="18.500" cy="19" r="5.500" fill="#ed1c2b" /></svg>
        <svg class="wifi" width="20" height="22" viewBox="0 0 20 22"><g fill="none" stroke="#fff" stroke-width="1.400"><path d="M1 19Q2 4 18 2" opacity=".7" /><path d="M4.500 21Q4 8 18 6.500M8 21Q8 12 18 11M12 21Q12 16 18 15.500" /></g><circle cx="16.500" cy="19.500" r="1.800" fill="#fff" /></svg>
        <svg class="vol" width="24" height="22" viewBox="0 0 24 22"><path d="M1 7h4l6-5v18l-6-5H1z M13.500 8q2 3 0 6M16.500 5.500q4 5.500 0 11" fill="none" stroke="#fff" stroke-width="1.400" /><path d="M19.500 3q6 8 0 16" fill="none" stroke="#8591a5" stroke-width="1.400" /></svg>
        <div class="clock"><div><span v-fit="64">1:32 PM</span></div><div><span v-fit="74">9/7/2024</span></div></div>
        <div class="notes"><svg width="24" height="24" viewBox="0 0 24 24"><path d="M0 0h24v19H12l-3 4-3-4H0z" fill="#fff" /><path d="M4 5.500h16M4 9.500h16M4 13.500h10" stroke="#1c2b43" stroke-width="1.500" /></svg><b>2</b></div>
        <i class="desk"></i>
      </div>
    </footer>
  </div>
</template>

<style>
body { margin: 0; overflow: hidden; }
</style>

<style scoped>
.screen { width: 1920px; height: 1080px; overflow: hidden; display: flex; flex-direction: column; background: #fff; font-family: "Open Sans", "Noto Sans", sans-serif; }
svg { display: block; flex: none; overflow: visible; }
i { display: block; }
.tabstrip { height: 60px; background: #d3e3fd; display: flex; align-items: flex-start; flex: none; }
.tab-search { width: 42px; height: 42px; margin: 9px 5px 0 9px; border-radius: 14px; background: #e9f0fe; display: flex; align-items: center; justify-content: center; }
.tab { width: 36px; height: 60px; display: flex; align-items: flex-start; padding-top: 18px; box-sizing: border-box; flex: none; }
.tab svg { margin-left: 6px; }
.tab i { width: 3px; height: 24px; margin: 1px 0 0 4px; background: #a8c7fa; }
.tab-active { margin: 9px 0 0 -9px; width: 72px; flex: none; }
.plus { margin: 22px 0 0 10px; }
.win { display: flex; gap: 53px; margin: 22px 0 0 119px; }
.toolbar-bg { background: #d3e3fd; flex: none; height: 71px; }
.toolbar { height: 69px; background: #fff; border-radius: 12px 12px 0 0; display: flex; align-items: center; border-bottom: 2px solid #e1e3e1; }
.nav-icon:nth-child(1) { margin-left: 24px; }
.nav-icon:nth-child(2) { margin-left: 36px; }
.nav-icon:nth-child(3) { margin-left: 35px; }
.omnibox { width: 1479px; height: 51px; margin-left: 29px; border-radius: 26px; background: #ecf0fa; display: flex; align-items: center; }
.info { width: 35px; height: 36px; border-radius: 18px; background: #fff; margin-left: 8px; display: flex; align-items: center; justify-content: center; }
.url { width: 1329px; margin-left: 12.500px; font-size: 20px; line-height: 40px; color: #1f1f1f; white-space: nowrap; }
.url > span { display: inline-block; }
.dim { color: #474747; }
.zoomi { margin: 0 25.500px 0 0; }
.phone { margin-left: 29px; }
.puzzle { margin-left: 32px; }
.tsep { width: 3px; height: 24px; background: #d3e3fd; margin-left: 25px; }
.profile { width: 30px; height: 30px; border-radius: 15px; background: #0097a7; color: #fff; font-size: 16px; line-height: 30px; text-align: center; margin-left: 24px; }
.dots { margin-left: 37px; display: flex; flex-direction: column; gap: 4px; }
.dots i { width: 4.500px; height: 4.500px; border-radius: 50%; background: #454746; }

.viewport { height: 889px; display: flex; flex: none; overflow: hidden; }
.page { width: 1895px; font-family: Lato, "Open Sans", sans-serif; overflow: hidden; height: 889px; }
.page span { display: inline-block; white-space: nowrap; }
.site-header { height: 162px; background: #eaf5ff; display: flex; align-items: flex-start; }
.logo { margin: 21px 0 0 161px; }
nav { display: flex; gap: 55px; margin: 51px 0 0 79px; width: 1158.500px; font-size: 19px; font-weight: 300; line-height: 58px; color: #000; }
nav a { display: flex; gap: 10px; flex: none; }
nav svg { margin-top: 24px; }
.quote-wrap { display: flex; align-items: flex-end; height: 61px; margin: 51px 0 0 -37.500px; }
.quote-wrap i { width: 66px; height: 4px; background: #265999; }
.quote { width: 139px; height: 61px; box-sizing: border-box; padding-left: 21px; background: #265999; color: #fff; font-size: 19px; line-height: 58px; }
.services { padding-top: 13px; }
h1 { margin: 0 0 0 650px; font-size: 58.500px; line-height: 76px; font-weight: 700; color: #265999; height: 72px; }
.rule { display: flex; gap: 7px; margin: 25px 0 0 851px; }
.rule i { height: 7px; border-radius: 4px; background: #265999; width: 87px; }
.rule i:nth-child(2) { width: 27px; }
.rule i:nth-child(3) { width: 13px; }
.cards { display: flex; margin: 142px 0 0 162px; width: 1539px; }
.card { width: 513px; height: 600px; box-sizing: border-box; border-right: 1px solid #ccc; padding: 81px 0 0 61px; color: #1c1c1c; flex: none; }
.pic { margin-bottom: 66.500px; }
.sip .pic { margin-bottom: 71.500px; }
.broadband .pic { margin-bottom: 67.700px; }
h2 { margin: 0; font-size: 32px; line-height: 43px; height: 40px; color: #265999; }
p { margin: 50px 0 0; font-size: 22.600px; line-height: 25.150px; font-weight: 300; }
.sip { background: #265999; color: #fff; }
.sip h2 { color: #fff; }
.sip p { font-weight: 400; }
.scrollbar { width: 25px; background: #f0f0f0; display: flex; flex-direction: column; align-items: center; }
.scrollbar svg { margin-top: 10px; }
.scrollbar i { width: 21px; height: 89px; margin-top: 135px; background: #c1c1c1; }
.scrollbar .down { margin-top: 634px; }

.taskbar { height: 60px; flex: none; display: flex; background: linear-gradient(90deg, #20363f, #20343f 55%, #1b2b42 78%, #1a2845); color: #fff; }
.start { width: 72px; display: flex; padding: 18px 0 0 24px; box-sizing: border-box; }
.search { width: 432px; height: 60px; box-sizing: border-box; border: 2px solid #c0c0c0; background: #f1f1f1; color: #222; display: flex; font-size: 21.500px; line-height: 59px; white-space: nowrap; }
.search span { display: inline-block; width: auto; flex: none; }
.lens { margin: 16px 18px 0 16px; }
.mush { margin: 4px 8px 0 auto; }
.app { width: 75px; height: 60px; display: flex; justify-content: center; padding-top: 12px; box-sizing: border-box; position: relative; flex: none; }
.app.active { background: #4d5d67; width: 73px; margin: 0 1px; }
.app.open::after, .app.active::after, .app.multi::after { content: ""; position: absolute; bottom: 0; left: 8px; width: 61px; height: 3px; background: #76b9ed; }
.app.active::after { left: 0; width: 73px; }
.app.multi::after { background: linear-gradient(90deg, #76b9ed 47px, #4c6b84 47px, #4c6b84 49px, #6391b8 49px); }
.tray { display: flex; width: 666px; padding-left: 109px; box-sizing: border-box; }
.weather { margin-top: 12px; }
.temp { margin-left: 10px; font-size: 21px; line-height: 61px; width: 44px; white-space: nowrap; }
.temp span, .clock span { display: inline-block; white-space: nowrap; }
.chev { margin: 22px 0 0 38px; }
.bat { margin: 20px 0 0 14px; }
.cam { margin: 19px 0 0 16px; }
.mic { margin: 18px 0 0 17px; }
.upd { margin: 17px 0 0 15px; }
.wifi { margin: 20px 0 0 15px; }
.vol { margin: 19px 0 0 13px; }
.clock { width: 80px; margin-left: 18px; text-align: center; font-size: 18px; line-height: 28px; padding-top: 2px; }
.notes { margin: 18px 0 0 30px; position: relative; width: 24px; }
.notes b { position: absolute; left: 11px; top: 11px; width: 22px; height: 22px; border: 1px solid #8a9099; border-radius: 50%; background: #2b2f38; font-size: 17px; line-height: 22px; text-align: center; font-weight: 600; }
.desk { width: 2px; height: 60px; background: #7a8292; margin-left: 30px; }
</style>
